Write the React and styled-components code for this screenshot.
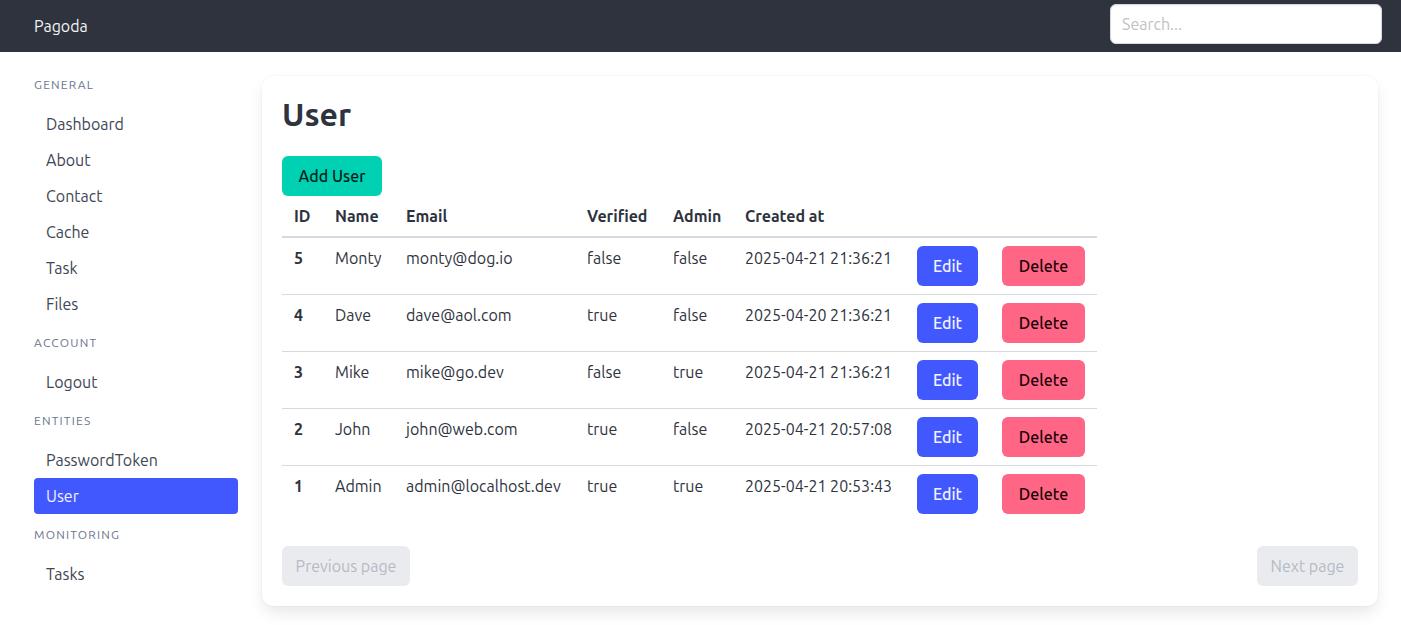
import React from "react";
import styled, { createGlobalStyle } from "styled-components";

const GlobalStyle = createGlobalStyle`
  *, *::before, *::after { box-sizing: border-box; }
  body {
    margin: 0;
    background: #fff;
    color: #404654;
    font-family: Ubuntu, "Noto Sans", "Open Sans", sans-serif;
    font-size: 16px;
    line-height: 24px;
  }
  button, input { font: inherit; }
`;

const Navbar = styled.header`
  display: flex;
  align-items: flex-start;
  justify-content: space-between;
  min-height: 52px;
  padding: 4px 19px 4px 34px;
  background: #2e333d;
`;

const Brand = styled.a`
  padding: 10px 0;
  color: #f3f4f6;
  text-decoration: none;
`;

const SearchInput = styled.input`
  width: 272px;
  height: 40px;
  padding: 7px 11px;
  border: 1px solid #d6d9e0;
  border-radius: 6px;
  background: #fff;
  color: #2e333d;
  box-shadow: inset 0 1px 2px rgba(10, 10, 10, 0.05);
  &::placeholder { color: #c0c2c5; opacity: 1; }
`;

const Columns = styled.div`
  display: flex;
  align-items: flex-start;
  padding: 12px 11px 12px 22px;
`;

const Sidebar = styled.nav`
  flex: 0 0 calc(100% / 6);
  min-width: 0;
  padding: 12px;
`;

const Main = styled.main`
  flex: 1;
  min-width: 0;
  padding: 12px;
`;

const MenuLabel = styled.h2`
  margin: 0 0 12px;
  color: #69748c;
  font-size: 12px;
  font-weight: 400;
  line-height: 18px;
  letter-spacing: 0.1em;
  text-transform: uppercase;
  ul + & { margin-top: 12px; }
`;

const MenuList = styled.ul`
  margin: 0;
  padding: 0;
  list-style: none;
`;

const MenuLink = styled.a`
  display: block;
  padding: 6px 12px;
  border-radius: 4px;
  background: ${(p) => (p.$active ? "#4258ff" : "transparent")};
  color: ${(p) => (p.$active ? "#f0f2ff" : "#404654")};
  text-decoration: none;
`;

const Card = styled.section`
  padding: 20px;
  border-radius: 12px;
  background: #fff;
  box-shadow: 0 8px 16px -2px rgba(10, 10, 10, 0.1), 0 0 0 1px rgba(10, 10, 10, 0.02);
`;

const Title = styled.h1`
  margin: 0 0 24px;
  color: #2e333d;
  font-size: 32px;
  font-weight: 600;
  line-height: 36px;
`;

const tones = {
  primary: ["#00d1b2", "#001f1b"],
  link: ["#4258ff", "#f0f2ff"],
  danger: ["#ff6685", "#1a0005"],
};

const Button = styled.button`
  display: block;
  height: 40px;
  padding: 0 16px;
  border: 0;
  border-radius: 6px;
  background: ${(p) => tones[p.$tone][0]};
  color: ${(p) => tones[p.$tone][1]};
  font-weight: 500;
  white-space: nowrap;
  cursor: pointer;
`;

const AddButton = styled(Button)`
  min-width: 100px;
`;

const RowButton = styled(Button)`
  width: 100%;
  padding: 0;
`;

const Table = styled.table`
  width: 815px;
  max-width: 100%;
  margin-bottom: 24px;
  border-collapse: separate;
  border-spacing: 0;
  table-layout: fixed;
  color: #2e333d;
`;

const Col = styled.col`
  width: ${(p) => p.$width}px;
`;

const HeadCell = styled.th`
  padding: 8px 12px;
  border-bottom: 2px solid #d6d9e0;
  font-weight: 600;
  text-align: left;
  white-space: nowrap;
`;

const Row = styled.tr`
  & > * {
    padding: 8px 12px;
    border-bottom: 1px solid #d6d9e0;
    text-align: left;
    vertical-align: top;
    white-space: nowrap;
  }
  & > th { font-weight: 700; }
  &:last-child > * { border-bottom: 0; }
`;

const Pager = styled.div`
  display: flex;
  justify-content: space-between;
`;

const PageButton = styled.button`
  height: 40px;
  min-width: ${(p) => p.$minWidth}px;
  padding: 0 12px;
  border: 0;
  border-radius: 6px;
  background: #eaebef;
  color: #b5bac6;
`;

const menu = [
  ["General", ["Dashboard", "About", "Contact", "Cache", "Task", "Files"]],
  ["Account", ["Logout"]],
  ["Entities", ["PasswordToken", "User"]],
  ["Monitoring", ["Tasks"]],
];

const columns = [
  ["ID", 41],
  ["Name", 71],
  ["Email", 181],
  ["Verified", 86],
  ["Admin", 72],
  ["Created at", 172],
  ["", 85],
  ["", 107],
];

const users = [
  [5, "Monty", "monty@dog.io", false, false, "2025-04-21 21:36:21"],
  [4, "Dave", "dave@aol.com", true, false, "2025-04-20 21:36:21"],
  [3, "Mike", "mike@go.dev", false, true, "2025-04-21 21:36:21"],
  [2, "John", "john@web.com", true, false, "2025-04-21 20:57:08"],
  [1, "Admin", "admin@localhost.dev", true, true, "2025-04-21 20:53:43"],
];

export default function App() {
  return (
    <>
      <GlobalStyle />
      <Navbar>
        <Brand href="#">Pagoda</Brand>
        <SearchInput type="search" placeholder="Search..." aria-label="Search" />
      </Navbar>
      <Columns>
        <Sidebar>
          {menu.map(([label, items]) => (
            <React.Fragment key={label}>
              <MenuLabel>{label}</MenuLabel>
              <MenuList>
                {items.map((item) => (
                  <li key={item}>
                    <MenuLink href="#" $active={item === "User"}>{item}</MenuLink>
                  </li>
                ))}
              </MenuList>
            </React.Fragment>
          ))}
        </Sidebar>
        <Main>
          <Card>
            <Title>User</Title>
            <AddButton type="button" $tone="primary">Add User</AddButton>
            <Table>
              <colgroup>
                {columns.map(([, width], i) => <Col key={i} $width={width} />)}
              </colgroup>
              <thead>
                <tr>
                  {columns.map(([name], i) => <HeadCell key={i} scope="col">{name}</HeadCell>)}
                </tr>
              </thead>
              <tbody>
                {users.map(([id, name, email, verified, admin, created]) => (
                  <Row key={id}>
                    <th scope="row">{id}</th>
                    <td>{name}</td>
                    <td>{email}</td>
                    <td>{String(verified)}</td>
                    <td>{String(admin)}</td>
                    <td>{created}</td>
                    <td><RowButton type="button" $tone="link">Edit</RowButton></td>
                    <td><RowButton type="button" $tone="danger">Delete</RowButton></td>
                  </Row>
                ))}
              </tbody>
            </Table>
            <Pager>
              <PageButton type="button" disabled $minWidth={128}>Previous page</PageButton>
              <PageButton type="button" disabled $minWidth={101}>Next page</PageButton>
            </Pager>
          </Card>
        </Main>
      </Columns>
    </>
  );
}
